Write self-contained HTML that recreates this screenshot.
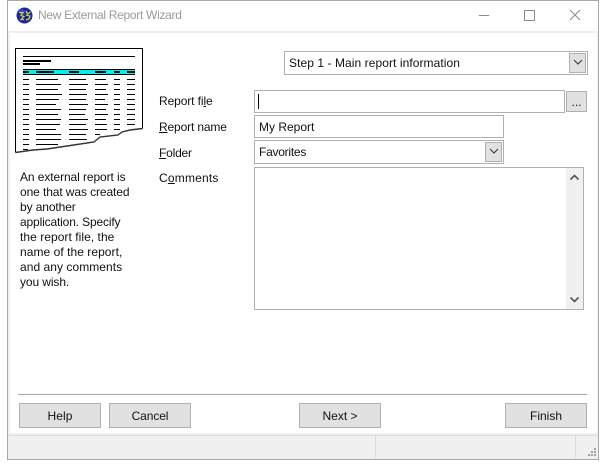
<!DOCTYPE html>
<html><head><meta charset="utf-8"><style>
html,body{margin:0;padding:0;width:606px;height:467px;background:#fff;overflow:hidden}
body{position:relative;font-family:"Liberation Sans",sans-serif;font-size:12px;color:#111}
div{position:absolute;box-sizing:border-box}
.t{white-space:nowrap;line-height:15px}
.f{border:1px solid #b0b0b0;background:#fff}
.b{border:1px solid #b0b0b0;background:#e1e1e1;height:25px;text-align:center;line-height:24px}
.c{background:#e1e1e1;border:1px solid #b0b0b0}
u{text-decoration:underline}
</style></head><body>
<div style="left:7px;top:0;width:592px;height:460px;border:1px solid #a8a8a8;background:#f0f0f0"></div>
<div style="left:8px;top:1px;width:590px;height:30px;background:#fff"></div>
<div style="left:10px;top:33px;width:587px;height:400px;background:#fff"></div>
<div style="left:8px;top:435px;width:590px;height:1px;background:#dcdcdc"></div>
<svg style="position:absolute;left:16px;top:7px" width="17" height="17" viewBox="0 0 17 17"><circle cx="8.500" cy="8.500" r="8" fill="#1a2a9c"/><circle cx="6" cy="5" r="3" fill="#3c4cc8" opacity=".7"/><path d="M3 5.500h4l-2 3 3 1-3 3h3M10 4l1.500 3 3-2M10 8l4 1-1 3-3 1" stroke="#d8d040" stroke-width="1.200" fill="none"/></svg>
<div class="t" style="left:38px;top:8px;color:#9a9a9a;letter-spacing:-.3px">New External Report Wizard</div>
<svg style="position:absolute;left:470px;top:5px" width="120" height="20"><path d="M9 10.500h10" stroke="#8a8a8a"/><rect x="54.500" y="5.500" width="10" height="10" fill="none" stroke="#8a8a8a"/><path d="M100 5l10 10M110 5l-10 10" stroke="#8a8a8a" fill="none"/></svg>

<svg style="position:absolute;left:0;top:40px" width="150" height="120" viewBox="0 40 150 120" shape-rendering="crispEdges">
<path d="M15.500 48.500H142.500V128.500L130 130L122 132L118 135L100 137L94 142L67 146L47 149L33 150L15.500 152.500Z" fill="#fff"/>
<g fill="#000">
<rect x="23" y="56" width="112" height="1"/><rect x="23" y="60" width="28" height="2"/><rect x="23" y="63" width="17" height="2"/>
<rect x="23" y="69" width="112" height="6" fill="#00f0f0"/><rect x="23" y="69" width="112" height="1"/><rect x="23" y="74" width="112" height="1"/>
<rect x="23" y="71" width="6" height="2"/><rect x="36" y="71" width="18" height="2"/><rect x="69" y="71" width="10" height="2"/><rect x="95" y="71" width="11" height="2"/><rect x="114" y="71" width="6" height="2"/><rect x="127" y="71" width="8" height="2"/>
</g>
<g stroke="#000" stroke-width="1" fill="none">
<path d="M23 79.500h6M36 79.500h22M69 79.500h17M95 79.500h11M114 79.500h6M127 79.500h8"/>
<path d="M23 84.500h6M36 84.500h25M69 84.500h19M95 84.500h13M114 84.500h6M127 84.500h8"/>
<path d="M23 89.500h6M36 89.500h22M69 89.500h17M95 89.500h11M114 89.500h6M127 89.500h8"/>
<path d="M23 94.500h6M36 94.500h26M69 94.500h18M95 94.500h13M114 94.500h6M127 94.500h8"/>
<path d="M23 99.500h6M36 99.500h23M69 99.500h17M95 99.500h10M114 99.500h6M127 99.500h8"/>
<path d="M23 104.500h6M36 104.500h20M69 104.500h19M95 104.500h13M114 104.500h6M127 104.500h8"/>
<path d="M23 109.500h6M36 109.500h25M69 109.500h17M95 109.500h11M114 109.500h6M127 109.500h8"/>
<path d="M23 114.500h6M36 114.500h22M69 114.500h16M95 114.500h13M114 114.500h6M127 114.500h8"/>
<path d="M23 119.500h6M36 119.500h25M69 119.500h19M95 119.500h11M114 119.500h6M127 119.500h8"/>
<path d="M23 124.500h6M36 124.500h24M69 124.500h17M95 124.500h12M114 124.500h6M127 124.500h8"/>
<path d="M23 129.500h6M36 129.500h20M69 129.500h19M95 129.500h12M114 129.500h6"/>
<path d="M23 134.500h6M36 134.500h25M69 134.500h17M95 134.500h5"/>
<path d="M23 139.500h6M36 139.500h25M69 139.500h18"/>
<path d="M23 144.500h6M36 144.500h22"/>
<path d="M23 149.500h5"/>
</g>
<path d="M15.500 152.500V48.500H142.500V128.500" fill="none" stroke="#000"/>
<path d="M142.500 128.500L130 130L122 132L118 135L100 137L94 142L67 146L47 149L33 150L15.500 152.500" fill="none" stroke="#333" stroke-width="1.400" shape-rendering="auto"/>
</svg>

<div class="t" style="left:20px;top:170px;letter-spacing:-.09px">An external report is</div>
<div class="t" style="left:20px;top:185px;letter-spacing:-.1px">one that was created</div>
<div class="t" style="left:20px;top:200px;letter-spacing:-.1px">by another</div>
<div class="t" style="left:20px;top:215px;letter-spacing:-.15px">application. Specify</div>
<div class="t" style="left:20px;top:230px;letter-spacing:.05px">the report file, the</div>
<div class="t" style="left:20px;top:245px;letter-spacing:.05px">name of the report,</div>
<div class="t" style="left:20px;top:260px;letter-spacing:.05px">and any comments</div>
<div class="t" style="left:20px;top:275px;letter-spacing:-.1px">you wish.</div>

<div class="f" style="left:284px;top:51px;width:304px;height:24px"></div>
<div class="t" style="left:289px;top:56px;letter-spacing:.07px">Step 1 - Main report information</div>
<div class="c" style="left:569px;top:53px;width:17px;height:20px"></div>
<svg style="position:absolute;left:573px;top:59px" width="10" height="7"><path d="M1 1l4 4 4-4" stroke="#333" fill="none"/></svg>

<div class="t" style="left:159px;top:94px;letter-spacing:-.1px">Report fi<u>l</u>e</div>
<div class="t" style="left:159px;top:120px;letter-spacing:-.15px"><u>R</u>eport name</div>
<div class="t" style="left:159px;top:146px;letter-spacing:-.2px"><u>F</u>older</div>
<div class="t" style="left:159px;top:171px;letter-spacing:.2px">C<u>o</u>mments</div>

<div class="f" style="left:254px;top:90px;width:311px;height:23px"></div>
<div style="left:258px;top:94px;width:1px;height:15px;background:#000"></div>
<div class="c" style="left:566px;top:91px;width:21px;height:21px;text-align:center;line-height:21px">...</div>

<div class="f" style="left:254px;top:115px;width:250px;height:23px"></div>
<div class="t" style="left:259px;top:120px">My Report</div>

<div class="f" style="left:254px;top:140px;width:250px;height:24px"></div>
<div class="t" style="left:259px;top:145px;letter-spacing:-.25px">Favorites</div>
<div class="c" style="left:485px;top:142px;width:17px;height:20px"></div>
<svg style="position:absolute;left:489px;top:148px" width="10" height="7"><path d="M1 1l4 4 4-4" stroke="#333" fill="none"/></svg>

<div class="f" style="left:254px;top:167px;width:330px;height:143px"></div>
<div style="left:566px;top:168px;width:17px;height:141px;background:#f0f0f0"></div>
<svg style="position:absolute;left:569px;top:174px" width="11" height="8"><path d="M1.500 5.500l4-4 4 4" stroke="#555" stroke-width="1.600" fill="none"/></svg>
<svg style="position:absolute;left:569px;top:296px" width="11" height="8"><path d="M1.500 1.500l4 4 4-4" stroke="#555" stroke-width="1.600" fill="none"/></svg>

<div style="left:18px;top:394px;width:569px;height:1px;background:#a8a8a8"></div>
<div class="b" style="left:19px;top:403px;width:82px;letter-spacing:.1px">Help</div>
<div class="b" style="left:109px;top:403px;width:82px;letter-spacing:-.1px">Cancel</div>
<div class="b" style="left:299px;top:403px;width:82px">Next &gt;</div>
<div class="b" style="left:505px;top:403px;width:82px">Finish</div>

<div style="left:375px;top:436px;width:1px;height:23px;background:#dcdcdc"></div>
<div style="left:575px;top:436px;width:1px;height:23px;background:#dcdcdc"></div>
<svg style="position:absolute;left:587px;top:448px" width="10" height="10" shape-rendering="crispEdges" fill="#a0a0a0"><rect x="7" y="0" width="2" height="2"/><rect x="4" y="3" width="2" height="2"/><rect x="7" y="3" width="2" height="2"/><rect x="1" y="6" width="2" height="2"/><rect x="4" y="6" width="2" height="2"/><rect x="7" y="6" width="2" height="2"/></svg>
</body></html>
